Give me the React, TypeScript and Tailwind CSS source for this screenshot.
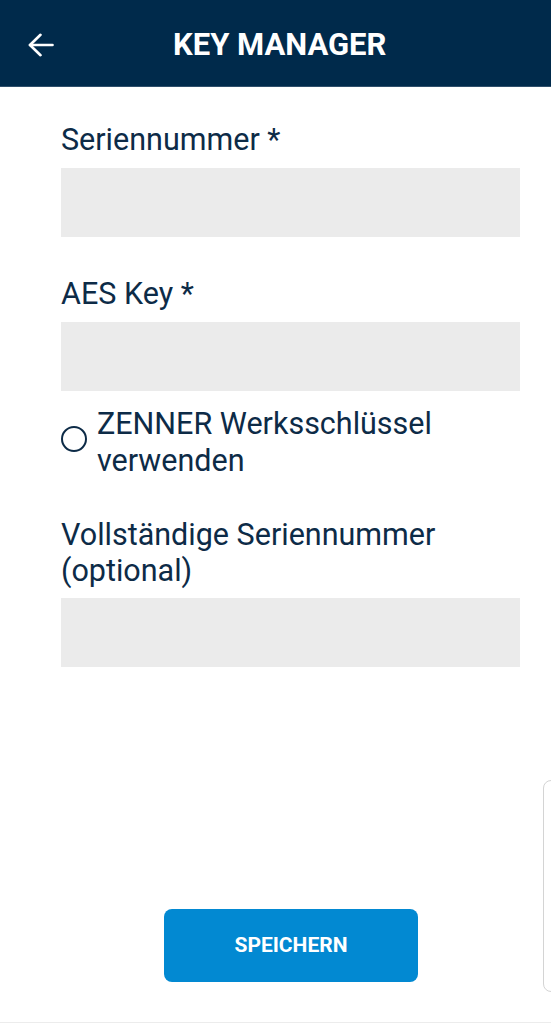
import React from "react";

export default function App() {
  return (
    <div className="relative w-[551px] h-[1024px] bg-white overflow-hidden" style={{ fontFamily: "Roboto, 'Noto Sans', sans-serif" }}>
      <div className="h-[87px] bg-[#002a4b] flex items-center border-b border-[#2f4f6b]">
        <div className="w-[82px] pl-[28px] pt-[3px]">
          <svg width="26" height="24" viewBox="0 0 26 24" fill="none" stroke="white" strokeWidth="2.6" strokeLinecap="round" strokeLinejoin="round">
            <path d="M2 12H24.5" />
            <path d="M12.5 1.8L2 12l10.5 10.2" />
          </svg>
        </div>
        <div className="flex-1 pl-[91px] pt-[4px] text-white font-bold text-[31px] leading-[36px]">KEY MANAGER</div>
      </div>

      <div className="pl-[61px] pr-[31px] text-[#0d2b47]">
        <div className="pt-[35px] text-[30.5px] leading-[36px]">Seriennummer *</div>
        <div className="mt-[10px] h-[69px] bg-[#ebebeb]" />

        <div className="pt-[39px] text-[30.5px] leading-[36px]">AES Key *</div>
        <div className="mt-[10px] h-[69px] bg-[#ebebeb]" />

        <div className="mt-[14px] flex items-start">
          <div className="mt-[21px] w-[26px] h-[26px] rounded-full border-2 border-[#0d2b47] shrink-0" />
          <div className="ml-[10px] text-[30.5px] leading-[37px]">ZENNER Werksschlüssel<br />verwenden</div>
        </div>

        <div className="pt-[38px] text-[30.5px] leading-[36px]">Vollständige Seriennummer<br />(optional)</div>
        <div className="mt-[9px] h-[69px] bg-[#ebebeb]" />
      </div>

      <div className="absolute left-[164px] top-[909px] w-[254px] h-[73px] rounded-[8px] bg-[#0289d2] flex items-center justify-center text-white font-bold text-[21px]">SPEICHERN</div>

      <div className="absolute left-[543px] top-[780px] w-[16px] h-[212px] rounded-[8px] border border-[#d4d4d4] bg-white" />
      <div className="absolute left-0 bottom-[1px] w-full h-[1px] bg-[#ececec]" />
    </div>
  );
}
